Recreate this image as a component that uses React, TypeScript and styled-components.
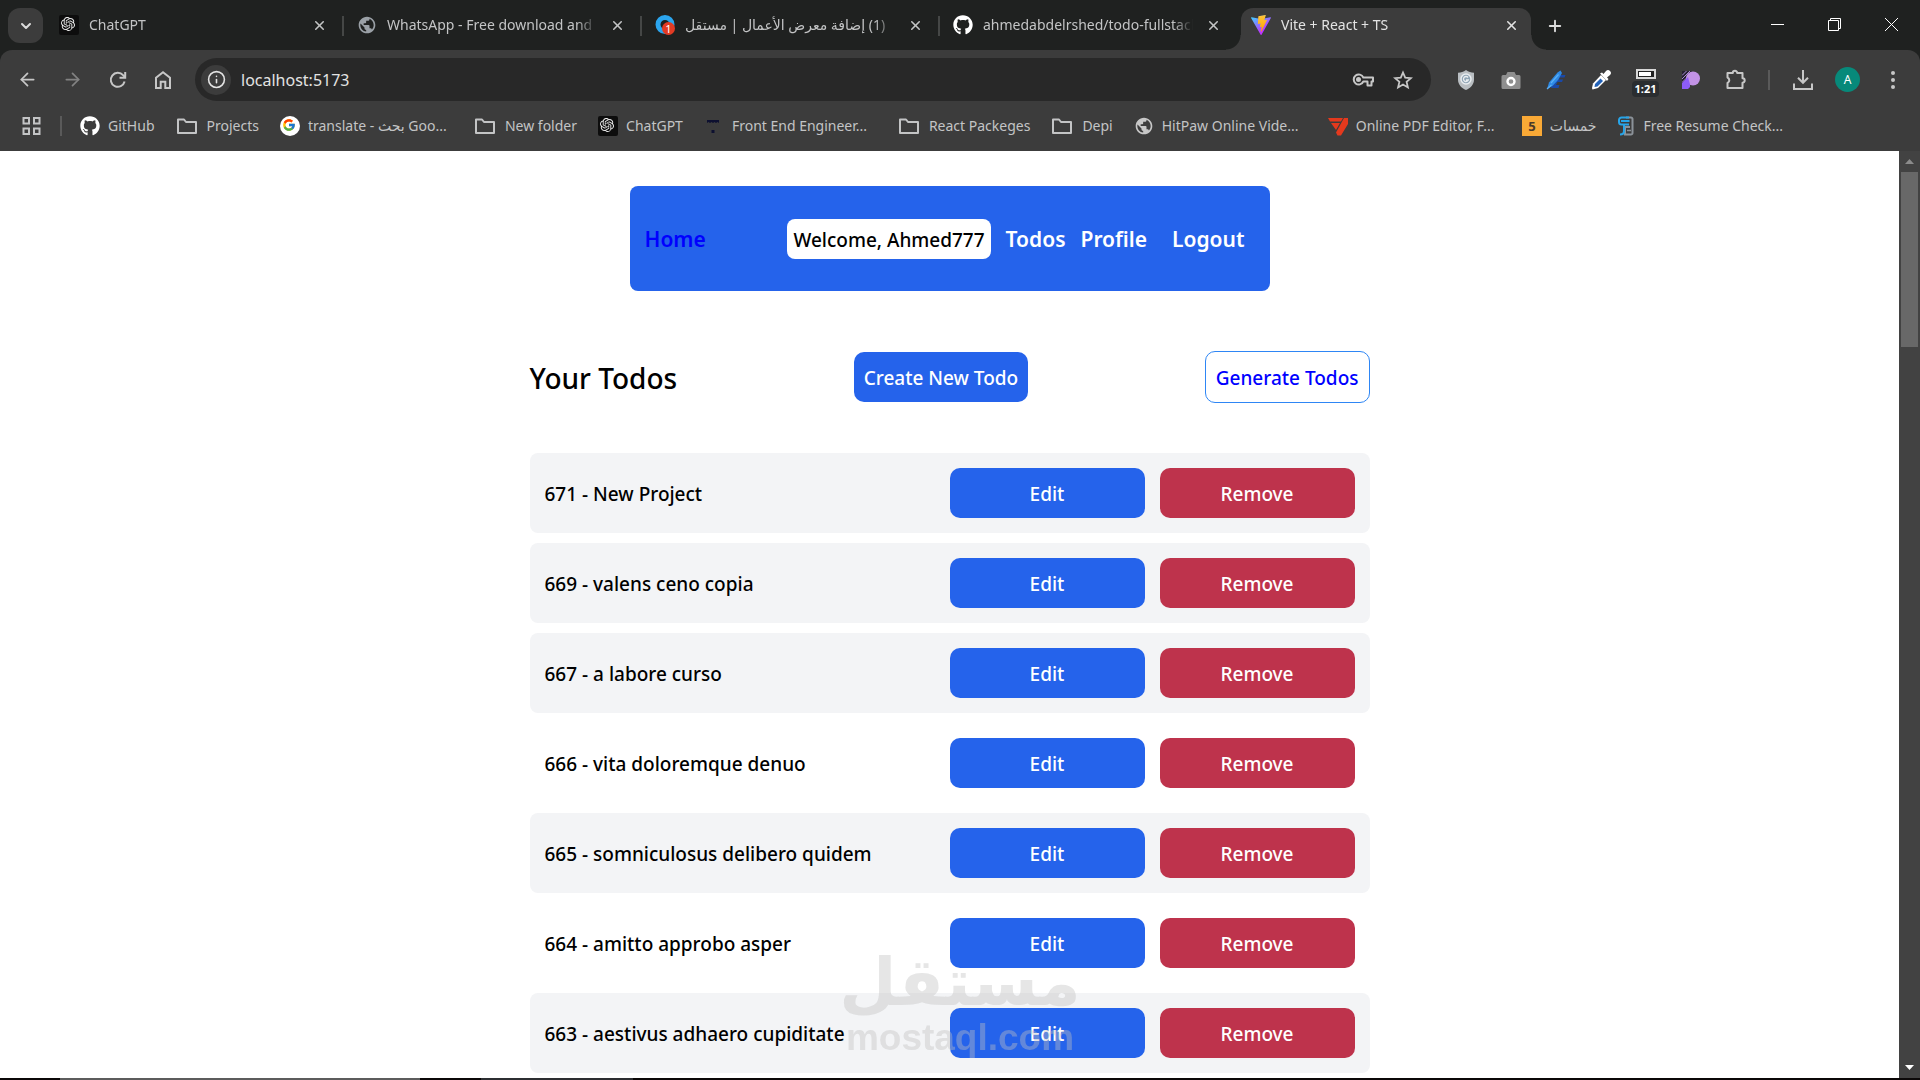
import React from "react";
import styled, { createGlobalStyle, css } from "styled-components";
import { ArrowLeft, ArrowRight, ChevronDown, Info, Plus, X } from "lucide-react";
import { SiOpenai } from "react-icons/si";
import { FaGithub } from "react-icons/fa";
import { FcGoogle } from "react-icons/fc";
import { MdPublic } from "react-icons/md";

const color = {
  strip: "#1f2120",
  bar: "#3c3c3c",
  field: "#282828",
  icon: "#c7c7c7",
  label: "#c3c4c5",
  divider: "#5a5a5a",
  blue: "#2563eb",
  red: "#be334c",
  row: "#f3f4f6",
};

const GlobalStyle = createGlobalStyle`
  *, *::before, *::after { box-sizing: border-box; }
  body { margin: 0; background: #fff; overflow: hidden; }
  body, button, input { font-family: "Noto Sans", "DejaVu Sans", sans-serif; }
  button { border: 0; padding: 0; background: none; color: inherit; cursor: pointer; }
  a { text-decoration: none; color: inherit; }
  ul { list-style: none; margin: 0; padding: 0; }
  svg { display: block; flex: none; }
`;

/* ---------- window ---------- */

const Window = styled.div`
  display: flex;
  flex-direction: column;
  height: 100vh;
`;

const TabStrip = styled.header`
  display: flex;
  flex: none;
  height: 50px;
  padding-left: 8px;
  background: ${color.strip};
  color: #dcdcdc;
`;

const TabSearch = styled.button`
  display: grid;
  place-items: center;
  width: 35px;
  height: 35px;
  margin: 8px 6px 0 0;
  border-radius: 12px;
  background: ${color.bar};
`;

const Tabs = styled.div`
  display: flex;
  gap: 8px;
  padding-top: 8px;
`;

const Tab = styled.div<{ $active?: boolean; $divided?: boolean }>`
  position: relative;
  display: flex;
  align-items: center;
  width: 290px;
  padding: 0 8px 8px 10px;
  font-size: 14px;
  line-height: 20px;
  color: ${(p) => (p.$active ? "#e3e3e3" : color.label)};

  ${(p) =>
    p.$divided &&
    css`
      &::before {
        content: "";
        position: absolute;
        left: -5px;
        top: 8px;
        width: 2px;
        height: 20px;
        background: #454746;
      }
    `}

  ${(p) =>
    p.$active &&
    css`
      border-radius: 12px 12px 0 0;
      background: ${color.bar};
      &::before,
      &::after {
        content: "";
        position: absolute;
        bottom: 0;
        width: 15px;
        height: 15px;
      }
      &::before {
        left: -15px;
        background: radial-gradient(circle at 0 0, transparent 14px, ${color.bar} 15px);
      }
      &::after {
        right: -15px;
        background: radial-gradient(circle at 100% 0, transparent 14px, ${color.bar} 15px);
      }
    `}
`;

const TabTitle = styled.span`
  flex: 1;
  min-width: 0;
  margin: 0 8px 0 10px;
  overflow: hidden;
  white-space: nowrap;
  text-align: left;
  mask-image: linear-gradient(to right, #000 calc(100% - 20px), transparent);
`;

const TabClose = styled.button`
  display: grid;
  place-items: center;
  width: 24px;
  height: 24px;
`;

const NewTab = styled.button`
  display: grid;
  place-items: center;
  width: 35px;
  height: 35px;
  margin: 8px 0 0 6px;
`;

const WindowControls = styled.div`
  display: flex;
  margin-left: auto;
`;

const WindowControl = styled.button`
  display: grid;
  place-items: center;
  width: 57px;
  height: 48px;
`;

/* ---------- toolbar ---------- */

const ToolbarBacking = styled.div`
  flex: none;
  background: ${color.strip};
`;

const Toolbar = styled.div`
  display: flex;
  align-items: center;
  height: 52px;
  padding: 7px 5px 0;
  border-radius: 12px 12px 0 0;
  background: ${color.bar};
  color: ${color.icon};
`;

const ToolButton = styled.button<{ $dim?: boolean }>`
  display: grid;
  place-items: center;
  flex: none;
  width: 45px;
  height: 44px;
  opacity: ${(p) => (p.$dim ? 0.5 : 1)};
`;

const AddressBar = styled.form`
  display: flex;
  align-items: center;
  flex: 1;
  height: 43px;
  margin: 0 12px 0 10px;
  padding: 0 8px 0 6px;
  border-radius: 22px;
  background: ${color.field};
`;

const SiteInfo = styled.button`
  display: grid;
  place-items: center;
  width: 30px;
  height: 30px;
  border-radius: 50%;
  background: ${color.bar};
  color: #e3e3e3;
`;

const AddressInput = styled.input`
  flex: 1;
  min-width: 0;
  height: 30px;
  padding: 0 10px;
  border: 0;
  outline: 0;
  background: transparent;
  color: #e3e3e3;
  font-size: 16px;
`;

const FieldButton = styled.button`
  display: grid;
  place-items: center;
  width: 40px;
  height: 40px;
`;

const ToolDivider = styled.span`
  width: 2px;
  height: 20px;
  margin: 0 10px;
  background: ${color.divider};
`;

const TimerButton = styled(ToolButton)`
  align-content: center;
  gap: 2px;
  padding-top: 6px;
`;

const TimerLabel = styled.span`
  padding: 0 3px;
  border-radius: 4px;
  background: #2a2d30;
  color: #fff;
  font-size: 11px;
  font-weight: 700;
  line-height: 16px;
`;

const Avatar = styled.span`
  display: grid;
  place-items: center;
  width: 25px;
  height: 25px;
  border-radius: 50%;
  background: #07897a;
  color: #fff;
  font-size: 12px;
`;

/* ---------- bookmarks ---------- */

const Bookmarks = styled.nav`
  display: flex;
  align-items: center;
  flex: none;
  height: 49px;
  padding: 0 22px 2px;
  background: ${color.bar};
  color: ${color.label};
`;

const BookmarkDivider = styled.span`
  width: 2px;
  height: 20px;
  margin: 0 18px 0 19px;
  background: ${color.divider};
`;

const BookmarkList = styled.div`
  display: flex;
  gap: 21px;
`;

const Bookmark = styled.a`
  display: flex;
  align-items: center;
  gap: 8px;
  font-size: 14px;
  line-height: 20px;
  white-space: nowrap;
`;

const BookmarkLabel = styled.span<{ $long?: boolean }>`
  min-width: ${(p) => (p.$long ? "145px" : "0")};
`;

/* ---------- page ---------- */

const Viewport = styled.div`
  display: flex;
  flex: 1;
  min-height: 0;
`;

const Page = styled.div`
  display: flex;
  flex: 1;
  flex-direction: column;
  align-items: center;
  overflow: hidden;
  background: #fff;
  color: #000;
  font-size: 19px;
  font-weight: 500;
  line-height: 30px;
`;

const NavBar = styled.nav`
  display: flex;
  align-items: center;
  justify-content: space-between;
  flex: none;
  width: min(640px, 100%);
  margin-top: 35px;
  padding: 33px 15px 32px;
  border-radius: 8px;
  background: ${color.blue};
  color: #fff;
  font-size: 21px;
  font-weight: 600;
`;

const HomeLink = styled.a`
  color: #0000ff;
`;

const NavList = styled.ul`
  display: flex;
  align-items: center;
  gap: 15px;
`;

const Welcome = styled.span`
  display: block;
  padding: 6px 6px 4px;
  border-radius: 8px;
  background: #fff;
  color: #000;
  font-size: 19px;
  font-weight: 500;
`;

const LogoutButton = styled.button`
  padding: 0 10px;
  font-size: 21px;
  font-weight: 600;
  line-height: 30px;
`;

const Todos = styled.main`
  flex: none;
  width: min(840px, 100%);
  margin-top: 60px;
`;

const TodosHeader = styled.div`
  display: flex;
  align-items: center;
  justify-content: space-between;
  margin-bottom: 50px;
`;

const Title = styled.h1`
  margin: 0;
  padding-top: 2px;
  font-size: 28px;
  font-weight: 500;
  line-height: 40px;
`;

const Button = styled.button<{ $kind?: "danger" | "outline" }>`
  padding: 11px 10px 9px;
  border-radius: 10px;
  background: ${(p) => (p.$kind === "danger" ? color.red : p.$kind === "outline" ? "#fff" : color.blue)};
  border: ${(p) => (p.$kind === "outline" ? "1px solid #2e86f5" : "0")};
  color: ${(p) => (p.$kind === "outline" ? "#0000ff" : "#fff")};
  font-size: 19px;
  font-weight: 500;
  line-height: 30px;
`;

const TodoList = styled.ul`
  display: grid;
  gap: 10px;
`;

const TodoRow = styled.li<{ $shaded: boolean }>`
  display: flex;
  align-items: center;
  justify-content: space-between;
  padding: 15px;
  border-radius: 8px;
  background: ${(p) => (p.$shaded ? color.row : "#fff")};
`;

const TodoLabel = styled.span`
  padding-top: 2px;
`;

const RowActions = styled.div`
  display: grid;
  grid-template-columns: 1fr 1fr;
  gap: 15px;
  width: 50%;
`;

const Scrollbar = styled.div`
  display: flex;
  flex-direction: column;
  align-items: center;
  justify-content: space-between;
  width: 21px;
  padding: 8px 0;
  background: #424242;
`;

const ScrollThumb = styled.div`
  width: 17px;
  height: 175px;
  margin: 8px 0 auto;
  background: #686868;
`;

const Taskbar = styled.footer`
  display: flex;
  flex: none;
  height: 2px;
  padding-left: 60px;
  background: #0b0808;
`;

const TaskItem = styled.span<{ $active?: boolean }>`
  width: ${(p) => (p.$active ? "360px" : "152px")};
  margin-right: 61px;
  background: ${(p) => (p.$active ? "#5c5c5c" : "#2c2e31")};
`;

const Watermark = styled.div`
  position: fixed;
  left: 0;
  right: 0;
  bottom: 22px;
  display: flex;
  flex-direction: column;
  align-items: center;
  opacity: 0.4;
  color: #c0c0c0;
  font-weight: 700;
  pointer-events: none;
`;

const WatermarkArabic = styled.span`
  font-family: "DejaVu Sans", sans-serif;
  font-size: 66px;
  line-height: 70px;
`;

const WatermarkLatin = styled.span`
  font-family: "Liberation Sans", sans-serif;
  font-size: 37px;
  line-height: 40px;
`;

/* ---------- icons ---------- */

const line = (w: number) => ({ fill: "none", stroke: "currentColor", strokeWidth: w });

const OpenAiIcon = () => (
  <svg width="20" height="20" viewBox="0 0 20 20">
    <rect width="20" height="20" rx="2" fill="#0d0d0d" />
    <SiOpenai x="2" y="2" width="16" height="16" color="#f0f0f0" />
  </svg>
);

const FolderIcon = () => (
  <svg width="23" height="20" viewBox="0 0 23 20" {...line(2)} strokeLinejoin="round">
    <path d="M2 3.500h6l2 2.500h10v11H2z" />
  </svg>
);

const AppsIcon = () => (
  <svg width="19" height="20" viewBox="0 0 19 20" {...line(2)}>
    <path d="M1.500 2h5.500v5.500H1.500zM12 2h5.500v5.500H12zM1.500 12.500h5.500V18H1.500zM12 12.500h5.500V18H12z" />
  </svg>
);

const MostaqlIcon = () => (
  <svg width="20" height="20" viewBox="0 0 20 20">
    <circle cx="10" cy="9.500" r="7" fill="none" stroke="#2ba5ee" strokeWidth="5" />
    <circle cx="13.500" cy="13.500" r="6.500" fill="#e23b24" />
    <text x="13.500" y="17.500" textAnchor="middle" fontSize="11" fontFamily="Noto Sans" fill="#fff">1</text>
  </svg>
);

const ViteIcon = () => (
  <svg width="20" height="20" viewBox="0 0 256 257">
    <defs>
      <linearGradient id="vite-a" x1="0" x2=".58" y1="0" y2=".78">
        <stop offset="0" stopColor="#41d1ff" />
        <stop offset="1" stopColor="#bd34fe" />
      </linearGradient>
      <linearGradient id="vite-b" x1=".43" x2=".5" y1="0" y2=".9">
        <stop offset="0" stopColor="#ffea83" />
        <stop offset=".1" stopColor="#ffc136" />
        <stop offset="1" stopColor="#ffa800" />
      </linearGradient>
    </defs>
    <path fill="url(#vite-a)" d="M255.153 37.938L134.897 252.976c-2.483 4.44-8.862 4.466-11.382.048L.875 37.958c-2.746-4.814 1.371-10.646 6.827-9.67l120.385 21.517a6.537 6.537 0 0 0 2.322-.004l117.867-21.483c5.438-.991 9.574 4.796 6.877 9.62Z" />
    <path fill="url(#vite-b)" d="M185.432.063L96.44 17.501a3.268 3.268 0 0 0-2.634 3.014l-5.474 92.456a3.268 3.268 0 0 0 3.997 3.378l24.777-5.718c2.318-.535 4.413 1.507 3.936 3.838l-7.361 36.047c-.495 2.426 1.782 4.5 4.151 3.78l15.304-4.649c2.372-.72 4.652 1.36 4.15 3.788l-11.698 56.621c-.732 3.542 3.979 5.473 5.943 2.437l1.313-2.028l72.516-144.72c1.215-2.423-.88-5.186-3.54-4.672l-25.505 4.922c-2.396.462-4.435-1.77-3.759-4.114l16.646-57.705c.677-2.35-1.37-4.583-3.769-4.113Z" />
  </svg>
);

const ReloadIcon = () => (
  <svg width="20" height="20" viewBox="0 0 20 20" {...line(2)}>
    <path d="M16.600 11.500a7 7 0 1 1-1.500-6.300L17 7" />
    <path d="M17.200 2v5.700h-5.700" />
  </svg>
);

const HomeIcon = () => (
  <svg width="20" height="20" viewBox="0 0 20 20" {...line(2)}>
    <path d="M3 18V7.700l7-5.400 7 5.400V18h-4.700v-6.200H7.700V18z" />
  </svg>
);

const KeyIcon = () => (
  <svg width="24" height="20" viewBox="0 0 24 20" {...line(2)} strokeLinejoin="round">
    <path d="M12.300 7.500h9.700v4h-1.500v4h-4v-4h-4.200a5 5 0 1 1 0-4z" />
    <circle cx="7.500" cy="9.500" r="1.500" fill="currentColor" />
  </svg>
);

const StarIcon = () => (
  <svg width="20" height="20" viewBox="0 0 20 20" {...line(1.8)}>
    <path d="M10 2.500l2.200 5.200 5.700.5-4.300 3.700 1.300 5.500-4.900-2.900-4.900 2.900 1.300-5.500-4.300-3.700 5.700-.5z" />
  </svg>
);

const ShieldIcon = () => (
  <svg width="18" height="20" viewBox="0 0 18 20">
    <path d="M9 0c2.500 1.800 5 2.500 8 2.700v7C17 14.500 13.500 18 9 20 4.500 18 1 14.500 1 9.700v-7C4 2.500 6.500 1.800 9 0z" fill="#b9bec2" />
    <circle cx="9" cy="9" r="5" fill="#8fa4b4" stroke="#e9edf0" strokeWidth="1.500" />
    <path d="M11 7.500a2.500 2.500 0 1 0 .3 2.500H9" fill="none" stroke="#e9edf0" strokeWidth="1.300" />
  </svg>
);

const CameraIcon = () => (
  <svg width="20" height="20" viewBox="0 0 20 20">
    <path d="M2 5h3l1.500-3h7L15 5h3a1.500 1.500 0 0 1 1.500 1.500v11A1.500 1.500 0 0 1 18 19H2a1.500 1.500 0 0 1-1.500-1.500v-11A1.500 1.500 0 0 1 2 5z" fill="#8f8f8f" />
    <circle cx="10" cy="11.500" r="3.500" fill="#8f8f8f" stroke="#fff" strokeWidth="2.400" />
  </svg>
);

const FeatherIcon = () => (
  <svg width="20" height="20" viewBox="0 0 20 20">
    <path d="M12 5h7.500l-1 2.500H14l-1 2h4l-1 2.500h-4.500l-1.500 3h3.500l-1 3H5l3-7z" fill="#1a49a8" />
    <path d="M1 19l2-6.500L11.500 2.500 14.500.500l1.500 2.500-4 7-5.500 6z" fill="#2e8ae6" />
    <path d="M1 19l4.500-4M5 13l7.500-8.500" fill="none" stroke="#5cb0f5" strokeWidth="1.200" />
  </svg>
);

const DropperIcon = () => (
  <svg width="20" height="20" viewBox="0 0 20 20">
    <path d="M10 5l5 5-8 8-5.500 1.500L1 18l1-4.500z" fill="#fff" />
    <path d="M9.500 8.500l2.500 2.500-5.500 5.500-3 .5.500-3z" fill="#2362b8" />
    <path d="M9 3.500l2-1 1.500 1.500 2.500-3a2.500 2.500 0 0 1 4 4l-3 2.500L17.500 9l-1.500 2z" fill="#fff" />
  </svg>
);

const BatteryIcon = () => (
  <svg width="20" height="10" viewBox="0 0 20 10">
    <rect x="1" y="1" width="18" height="8" fill="#222" stroke="#d8d8d8" strokeWidth="2" />
    <rect x="3" y="3" width="12" height="4" fill="#fff" />
  </svg>
);

const PurpleIcon = () => (
  <svg width="18" height="20" viewBox="0 0 18 20">
    <path d="M0 1h10L6 8l-6 6z" fill="#262130" />
    <path d="M0 9l8-8M0 5.500L4.500 1M0 12.500L10 2.500" stroke="#a98bd4" strokeWidth="1" />
    <circle cx="11" cy="8.500" r="7" fill="#c393e6" />
    <path d="M0 13l6-6 2 7.500V17l-2 2H0z" fill="#8d5cf6" />
  </svg>
);

const PuzzleIcon = () => (
  <svg width="22" height="22" viewBox="0 0 22 22" {...line(2)} strokeLinejoin="round">
    <path d="M2.500 4h5.300a2.200 2.200 0 0 1 4.400 0h5.300v5.300a2.200 2.200 0 0 1 0 4.400V19h-15v-5a3 3 0 0 0 0-5.500z" />
  </svg>
);

const DownloadIcon = () => (
  <svg width="22" height="22" viewBox="0 0 22 22" {...line(2)}>
    <path d="M11 1v12.500M6 8.800l5 5 5-5M2 14.500V20h18v-5.500" />
  </svg>
);

const MenuIcon = () => (
  <svg width="6" height="20" viewBox="0 0 6 20" fill="currentColor">
    <circle cx="3" cy="3" r="2" />
    <circle cx="3" cy="10" r="2" />
    <circle cx="3" cy="17" r="2" />
  </svg>
);

const NavyIcon = () => (
  <svg width="20" height="20" viewBox="0 0 20 20" fill="#0d1030">
    <path d="M3 4h12v3l-1.500-1L12 7l-1.500-1L9 7 7.500 6 6 7 4.500 6 3 7zM7.500 14h3v3h-3z" />
  </svg>
);

const PdfIcon = () => (
  <svg width="20" height="20" viewBox="0 0 20 20" fill="#e4391d">
    <path d="M0 2h15l-2 3.500H2zM3 7h9l-4 7zM16 2h4v6l-7 11.500H9.500L8 16.500z" />
  </svg>
);

const KhamsatIcon = () => (
  <svg width="20" height="20" viewBox="0 0 20 20">
    <rect width="20" height="20" fill="#f9a936" />
    <text x="10" y="15" textAnchor="middle" fontSize="13" fontWeight="700" fontFamily="Noto Sans" fill="#4a3a2a">5</text>
  </svg>
);

const ResumeIcon = () => (
  <svg width="18" height="20" viewBox="0 0 18 20" fill="none">
    <path d="M9 1.500h5a1.500 1.500 0 0 1 1.500 1.500v14a1.500 1.500 0 0 1-1.500 1.500H8V11h5" stroke="#8b9299" strokeWidth="2" />
    <path d="M10 14.500h4" stroke="#8b9299" strokeWidth="1.500" />
    <path d="M12 1.500H4.500a2.500 2.500 0 0 0-2.500 2.500v2a2.500 2.500 0 0 0 2.500 2.500H12M4 5h8.500M7 9v6c0 2-1.500 3.500-4 3.500" stroke="#27a4e8" strokeWidth="2" />
  </svg>
);

const GoogleIcon = () => (
  <svg width="20" height="20" viewBox="0 0 20 20">
    <circle cx="10" cy="10" r="10" fill="#fff" />
    <FcGoogle x="2" y="2" width="16" height="16" />
  </svg>
);

/* ---------- data ---------- */

const tabs = [
  { title: "ChatGPT", icon: <OpenAiIcon /> },
  { title: "WhatsApp - Free download and install", icon: <MdPublic size={20} color="#9aa0a6" />, divided: true },
  { title: "(1) إضافة معرض الأعمال | مستقل", icon: <MostaqlIcon />, divided: true, rtl: true },
  { title: "ahmedabdelrshed/todo-fullstack-app", icon: <FaGithub size={20} color="#fff" />, divided: true },
  { title: "Vite + React + TS", icon: <ViteIcon />, active: true },
];

const bookmarks = [
  { label: "GitHub", icon: <FaGithub size={20} color="#fff" /> },
  { label: "Projects", icon: <FolderIcon /> },
  { label: "translate - بحث Goo...", icon: <GoogleIcon />, long: true },
  { label: "New folder", icon: <FolderIcon /> },
  { label: "ChatGPT", icon: <OpenAiIcon /> },
  { label: "Front End Engineer...", icon: <NavyIcon />, long: true },
  { label: "React Packeges", icon: <FolderIcon /> },
  { label: "Depi", icon: <FolderIcon /> },
  { label: "HitPaw Online Vide...", icon: <MdPublic size={20} color="#c7c7c7" />, long: true },
  { label: "Online PDF Editor, F...", icon: <PdfIcon />, long: true },
  { label: "خمسات", icon: <KhamsatIcon /> },
  { label: "Free Resume Check...", icon: <ResumeIcon />, long: true },
];

const todos = [
  { id: 671, title: "New Project", shaded: true },
  { id: 669, title: "valens ceno copia", shaded: true },
  { id: 667, title: "a labore curso", shaded: true },
  { id: 666, title: "vita doloremque denuo", shaded: false },
  { id: 665, title: "somniculosus delibero quidem", shaded: true },
  { id: 664, title: "amitto approbo asper", shaded: false },
  { id: 663, title: "aestivus adhaero cupiditate", shaded: true },
];

/* ---------- app ---------- */

export default function App() {
  return (
    <Window>
      <GlobalStyle />
      <TabStrip>
        <TabSearch aria-label="Search tabs">
          <ChevronDown size={16} strokeWidth={3} />
        </TabSearch>
        <Tabs>
          {tabs.map((t) => (
            <Tab key={t.title} $active={t.active} $divided={t.divided}>
              {t.icon}
              <TabTitle dir={t.rtl ? "rtl" : "ltr"}>{t.title}</TabTitle>
              <TabClose aria-label="Close tab">
                <X size={15} strokeWidth={2.5} />
              </TabClose>
            </Tab>
          ))}
        </Tabs>
        <NewTab aria-label="New tab">
          <Plus size={18} strokeWidth={2.5} />
        </NewTab>
        <WindowControls>
          <WindowControl aria-label="Minimize">
            <svg width="13" height="13" viewBox="0 0 13 13" stroke="#fff">
              <path d="M0 6.500h13" />
            </svg>
          </WindowControl>
          <WindowControl aria-label="Restore">
            <svg width="13" height="13" viewBox="0 0 13 13" fill="none" stroke="#fff">
              <path d="M.5 2.500h10v10H.5zM2.500 2.500v-2h10v10h-2" />
            </svg>
          </WindowControl>
          <WindowControl aria-label="Close">
            <svg width="13" height="13" viewBox="0 0 13 13" stroke="#fff">
              <path d="M0 0l13 13M13 0L0 13" />
            </svg>
          </WindowControl>
        </WindowControls>
      </TabStrip>

      <ToolbarBacking>
        <Toolbar>
          <ToolButton aria-label="Back"><ArrowLeft size={21} /></ToolButton>
          <ToolButton aria-label="Forward" $dim><ArrowRight size={21} /></ToolButton>
          <ToolButton aria-label="Reload"><ReloadIcon /></ToolButton>
          <ToolButton aria-label="Home"><HomeIcon /></ToolButton>
          <AddressBar>
            <SiteInfo type="button" aria-label="Site information"><Info size={19} /></SiteInfo>
            <AddressInput aria-label="Address" defaultValue="localhost:5173" />
            <FieldButton type="button" aria-label="Passwords"><KeyIcon /></FieldButton>
            <FieldButton type="button" aria-label="Bookmark this page"><StarIcon /></FieldButton>
          </AddressBar>
          <ToolButton aria-label="Shield"><ShieldIcon /></ToolButton>
          <ToolButton aria-label="Screenshot"><CameraIcon /></ToolButton>
          <ToolButton aria-label="Feather"><FeatherIcon /></ToolButton>
          <ToolButton aria-label="Color picker"><DropperIcon /></ToolButton>
          <TimerButton aria-label="Timer">
            <BatteryIcon />
            <TimerLabel>1:21</TimerLabel>
          </TimerButton>
          <ToolButton aria-label="Capture"><PurpleIcon /></ToolButton>
          <ToolButton aria-label="Extensions"><PuzzleIcon /></ToolButton>
          <ToolDivider />
          <ToolButton aria-label="Downloads"><DownloadIcon /></ToolButton>
          <ToolButton aria-label="Profile"><Avatar>A</Avatar></ToolButton>
          <ToolButton aria-label="Menu"><MenuIcon /></ToolButton>
        </Toolbar>
      </ToolbarBacking>

      <Bookmarks aria-label="Bookmarks">
        <AppsIcon />
        <BookmarkDivider />
        <BookmarkList>
          {bookmarks.map((b) => (
            <Bookmark key={b.label} href="#">
              {b.icon}
              <BookmarkLabel $long={b.long}>{b.label}</BookmarkLabel>
            </Bookmark>
          ))}
        </BookmarkList>
      </Bookmarks>

      <Viewport>
        <Page>
          <NavBar>
            <HomeLink href="#">Home</HomeLink>
            <NavList>
              <li><Welcome>Welcome, Ahmed777</Welcome></li>
              <li><a href="#">Todos</a></li>
              <li><a href="#">Profile</a></li>
              <li><LogoutButton>Logout</LogoutButton></li>
            </NavList>
          </NavBar>
          <Todos>
            <TodosHeader>
              <Title>Your Todos</Title>
              <Button>Create New Todo</Button>
              <Button $kind="outline">Generate Todos</Button>
            </TodosHeader>
            <TodoList>
              {todos.map((t) => (
                <TodoRow key={t.id} $shaded={t.shaded}>
                  <TodoLabel>{t.id} - {t.title}</TodoLabel>
                  <RowActions>
                    <Button>Edit</Button>
                    <Button $kind="danger">Remove</Button>
                  </RowActions>
                </TodoRow>
              ))}
            </TodoList>
          </Todos>
        </Page>
        <Scrollbar aria-hidden="true">
          <svg width="9" height="5" viewBox="0 0 9 5" fill="#8b8b8b"><path d="M4.500 0L9 5H0z" /></svg>
          <ScrollThumb />
          <svg width="9" height="5" viewBox="0 0 9 5" fill="#fff"><path d="M0 0h9L4.500 5z" /></svg>
        </Scrollbar>
      </Viewport>

      <Taskbar>
        <TaskItem $active />
        <TaskItem />
      </Taskbar>

      <Watermark aria-hidden="true">
        <WatermarkArabic>مستقل</WatermarkArabic>
        <WatermarkLatin>mostaql.com</WatermarkLatin>
      </Watermark>
    </Window>
  );
}
